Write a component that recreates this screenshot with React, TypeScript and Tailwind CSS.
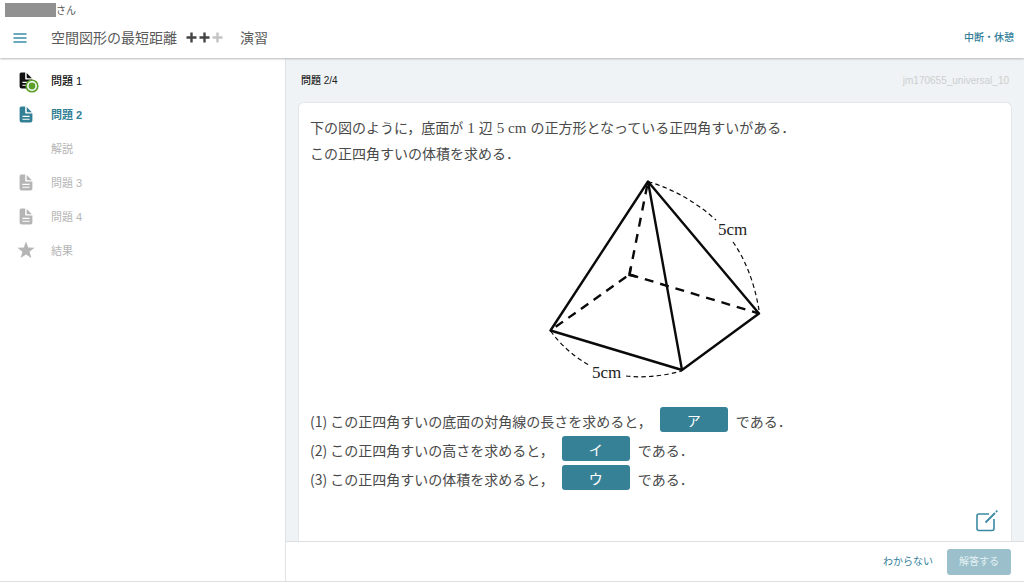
import React from "react";
import clsx from "clsx";

type NavItem = {
  label: string;
  icon: "file" | "star" | "none";
  state: "done" | "current" | "locked";
};

const navItems: NavItem[] = [
  { label: "問題 1", icon: "file", state: "done" },
  { label: "問題 2", icon: "file", state: "current" },
  { label: "解説", icon: "none", state: "locked" },
  { label: "問題 3", icon: "file", state: "locked" },
  { label: "問題 4", icon: "file", state: "locked" },
  { label: "結果", icon: "star", state: "locked" },
];

const questions = [
  { text: "(1) この正四角すいの底面の対角線の長さを求めると，", blank: "ア" },
  { text: "(2) この正四角すいの高さを求めると，", blank: "イ" },
  { text: "(3) この正四角すいの体積を求めると，", blank: "ウ" },
];

function FileIcon() {
  return (
    <svg viewBox="0 0 14 17" className="h-[17px] w-3.5" fill="currentColor">
      <path d="M2.2 0.4H6.2V6.4Q6.2 7.6 7.4 7.6H13.4V14.6Q13.4 16.6 11.4 16.6H2.6Q0.6 16.6 0.6 14.6V2Q0.6 0.4 2.2 0.4Z" />
      <path d="M7.7 1L12.9 6.3H8.5Q7.7 6.3 7.7 5.5Z" />
      <path d="M3.4 10.4H10.6M3.4 13.3H10.6" stroke="white" strokeWidth="1.1" />
    </svg>
  );
}

function StarIcon() {
  return (
    <svg viewBox="0 0 18 18" className="size-[18px]" fill="currentColor">
      <path d="M9 0.6L11.2 6.4L17.5 6.8L12.6 10.7L14.3 16.9L9 13.4L3.7 16.9L5.4 10.7L0.5 6.8L6.8 6.4Z" />
    </svg>
  );
}

function CorrectMark() {
  return (
    <svg viewBox="0 0 14 14" className="absolute top-[7px] left-2 size-3.5">
      <circle cx="7" cy="7" r="6.6" fill="#5aa02c" />
      <circle cx="7" cy="7" r="4.2" fill="none" stroke="white" strokeWidth="1.5" />
    </svg>
  );
}

function Plus({ className }: { className?: string }) {
  return (
    <svg viewBox="0 0 13 13" className={clsx("size-[13px]", className)} stroke="currentColor">
      <path d="M6.5 1.5V11.5M1.5 6.5H11.5" strokeWidth="2.4" />
    </svg>
  );
}

function Pyramid() {
  return (
    <svg
      viewBox="0 0 240 220"
      className="mx-auto mt-1 block h-[220px] w-60"
      fill="none"
      stroke="#0a0a0a"
      role="img"
      aria-label="正四角すい"
    >
      <path
        d="M113 11.5L15.5 160.5L147 200L224 143.5L113 11.5L147 200"
        strokeWidth="2.4"
        strokeLinejoin="round"
      />
      <g strokeWidth="2.4">
        <path d="M113 11.5L94.5 104.5" strokeDasharray="9 7.5" strokeDashoffset="-4" />
        <path d="M94.5 104.5L15.5 160.5" strokeDasharray="9 6.5" strokeDashoffset="-4" />
        <path d="M94.5 104.5L224 143.5" strokeDasharray="9 7" />
        <path d="M95.5 98L94.5 105L101 106.5" />
      </g>
      <g strokeWidth="1.2" strokeDasharray="4.5 3.2">
        <path d="M113 11.5Q151 23 181 50" />
        <path d="M198 72Q217 99 224 140" />
        <path d="M15.5 161Q32 183 54 195" />
        <path d="M91 206Q116 209 147 201" />
      </g>
      <g
        fill="#222"
        stroke="none"
        className="font-['Liberation_Serif',serif] text-[17px]"
      >
        <text x="183" y="65">5cm</text>
        <text x="57" y="208">5cm</text>
      </g>
    </svg>
  );
}

function Header() {
  return (
    <header className="relative z-10 h-[58px] shrink-0 bg-white shadow-[0_1px_2px_#b8b8b8]">
      <div className="flex h-[18px] items-center px-[5px] pt-0.5 text-[10px] text-[#555]">
        <span className="h-3.5 w-[51px] bg-[#919191]" />
        <span>さん</span>
      </div>
      <div className="flex h-[39px] items-center pr-2.5 pl-[13px]">
        <button type="button" aria-label="メニュー" className="text-[#3a8ca6]">
          <svg viewBox="0 0 14 10" className="h-2.5 w-3.5" stroke="currentColor">
            <path d="M0.5 1H13.5M0.5 5H13.5M0.5 9H13.5" strokeWidth="1.5" />
          </svg>
        </button>
        <h1 className="ml-6 flex items-center text-sm text-[#5a5a5a]">
          空間図形の最短距離
          <span className="mr-4 ml-2 flex text-[#444]">
            <Plus />
            <Plus />
            <Plus className="text-[#c4c4c4]" />
          </span>
          演習
        </h1>
        <a href="#pause" className="ml-auto text-[10px] font-medium text-[#34809a]">
          中断・休憩
        </a>
      </div>
    </header>
  );
}

function Sidebar() {
  return (
    <nav className="w-[285px] shrink-0 bg-white pt-[5px]">
      <ul>
        {navItems.map((item) => (
          <li key={item.label}>
            <a
              href="#question"
              className={clsx(
                "flex h-[34px] items-center pl-[17px] text-[11px]",
                item.state === "done" && "font-medium text-[#111]",
                item.state === "current" && "font-bold text-[#327f96]",
                item.state === "locked" && "text-[#b5b5b5]"
              )}
            >
              <span className="relative mr-4 flex w-[18px] justify-center">
                {item.icon === "file" && <FileIcon />}
                {item.icon === "star" && <StarIcon />}
                {item.state === "done" && <CorrectMark />}
              </span>
              <span className="pt-0.5">{item.label}</span>
            </a>
          </li>
        ))}
      </ul>
    </nav>
  );
}

export default function App() {
  return (
    <div className="flex h-screen flex-col border-b border-[#ddd] bg-white font-['Liberation_Sans','Noto_Sans_CJK_JP',sans-serif]">
      <Header />
      <div className="flex min-h-0 flex-1">
        <Sidebar />
        <div className="flex min-w-0 flex-1 flex-col border-l border-[#dfe3e5]">
          <main className="flex min-h-0 flex-1 flex-col bg-[#eff3f5] px-3">
            <div className="flex h-11 shrink-0 items-center justify-between px-[3px] text-[10px]">
              <h2 className="font-medium text-[#222]">問題 2/4</h2>
              <span className="text-[#cdcfd0]">jm170655_universal_10</span>
            </div>
            <section className="relative flex-1 rounded-t-md border border-b-0 border-[#e3e7e9] bg-white px-[11px] py-3 font-['Noto_Sans_CJK_JP',sans-serif] text-sm text-[#4a4a4a]">
              <p className="leading-[25px]">
                下の図のように，底面が
                <span className="mx-1 font-['Liberation_Serif',serif] text-[15px]">1</span>
                辺
                <span className="mx-1 font-['Liberation_Serif',serif] text-[15px]">5 cm</span>
                の正方形となっている正四角すいがある．
                <br />
                この正四角すいの体積を求める．
              </p>
              <Pyramid />
              <div className="mt-[17px]">
                {questions.map((q) => (
                  <div key={q.blank} className="flex h-[29px] items-start leading-[29px]">
                    <span>{q.text}</span>
                    <button
                      type="button"
                      className="mr-2 ml-2 h-[25px] w-[68px] rounded-[3px] bg-[#378197] leading-6 text-white"
                    >
                      {q.blank}
                    </button>
                    <span>である．</span>
                  </div>
                ))}
              </div>
              <button
                type="button"
                aria-label="メモ"
                className="absolute right-3 bottom-2 text-[#3b8aa3]"
              >
                <svg
                  viewBox="0 0 24 24"
                  className="size-6"
                  fill="none"
                  stroke="currentColor"
                  strokeWidth="1.6"
                >
                  <path d="M14 5H4Q2 5 2 7V19.5Q2 21.5 4 21.5H17Q19 21.5 19 19.5V10" />
                  <path d="M10.5 13.5L20 4M21 3L22.3 1.7" strokeWidth="1.8" />
                </svg>
              </button>
            </section>
          </main>
          <footer className="flex h-10 shrink-0 items-center justify-end gap-3.5 border-t border-[#dcdfe1] bg-white pr-[13px] text-[10px]">
            <button type="button" className="text-[#34809a]">
              わからない
            </button>
            <button type="button" className="h-[26px] w-16 rounded-[3px] bg-[#9bc0cb] text-[#e4f0f3]">
              解答する
            </button>
          </footer>
        </div>
      </div>
    </div>
  );
}
